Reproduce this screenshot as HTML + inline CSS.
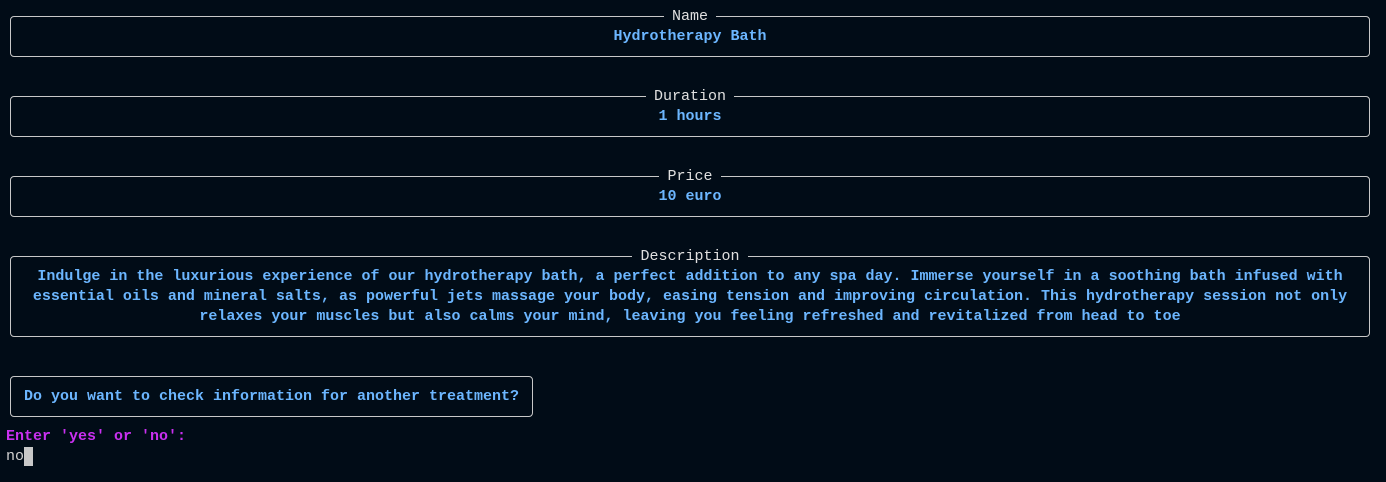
<!DOCTYPE html>
<html><head><style>
body{margin:0;width:1386px;height:482px;background:#010c17;overflow:hidden;font-family:"Liberation Mono",monospace;font-size:15px;line-height:20px;}
.box{position:absolute;border:1px solid #c8c8c8;border-radius:4px;box-sizing:border-box;}
.t{position:absolute;left:0;right:0;text-align:center;color:#6cb6ff;font-weight:bold;}
.lg{position:absolute;top:-10px;left:0;right:0;text-align:center;}
.lg span{background:#010c17;color:#e0e0e0;padding:0 8px;}
.p{position:absolute;left:6px;}
</style></head><body>
<div class="box" style="left:10px;top:16px;width:1360px;height:41px"><div class="lg"><span>Name</span></div><div class="t" style="top:10px">Hydrotherapy Bath</div></div>
<div class="box" style="left:10px;top:96px;width:1360px;height:41px"><div class="lg"><span>Duration</span></div><div class="t" style="top:10px">1 hours</div></div>
<div class="box" style="left:10px;top:176px;width:1360px;height:41px"><div class="lg"><span>Price</span></div><div class="t" style="top:10px">10 euro</div></div>
<div class="box" style="left:10px;top:256px;width:1360px;height:81px"><div class="lg"><span>Description</span></div><div class="t" style="top:10px;left:4px;right:4px">Indulge in the luxurious experience of our hydrotherapy bath, a perfect addition to any spa day. Immerse yourself in a soothing bath infused with essential oils and mineral salts, as powerful jets massage your body, easing tension and improving circulation. This hydrotherapy session not only relaxes your muscles but also calms your mind, leaving you feeling refreshed and revitalized from head to toe</div></div>
<div class="box" style="left:10px;top:376px;width:523px;height:41px"><div class="t" style="top:10px">Do you want to check information for another treatment?</div></div>
<div class="p" style="top:427px;color:#c930f0;font-weight:bold">Enter 'yes' or 'no':</div>
<div class="p" style="top:447px;color:#d0d0d0">no<span style="background:#c8c8c8;display:inline-block;width:9px;height:19px;vertical-align:top"></span></div>
</body></html>
